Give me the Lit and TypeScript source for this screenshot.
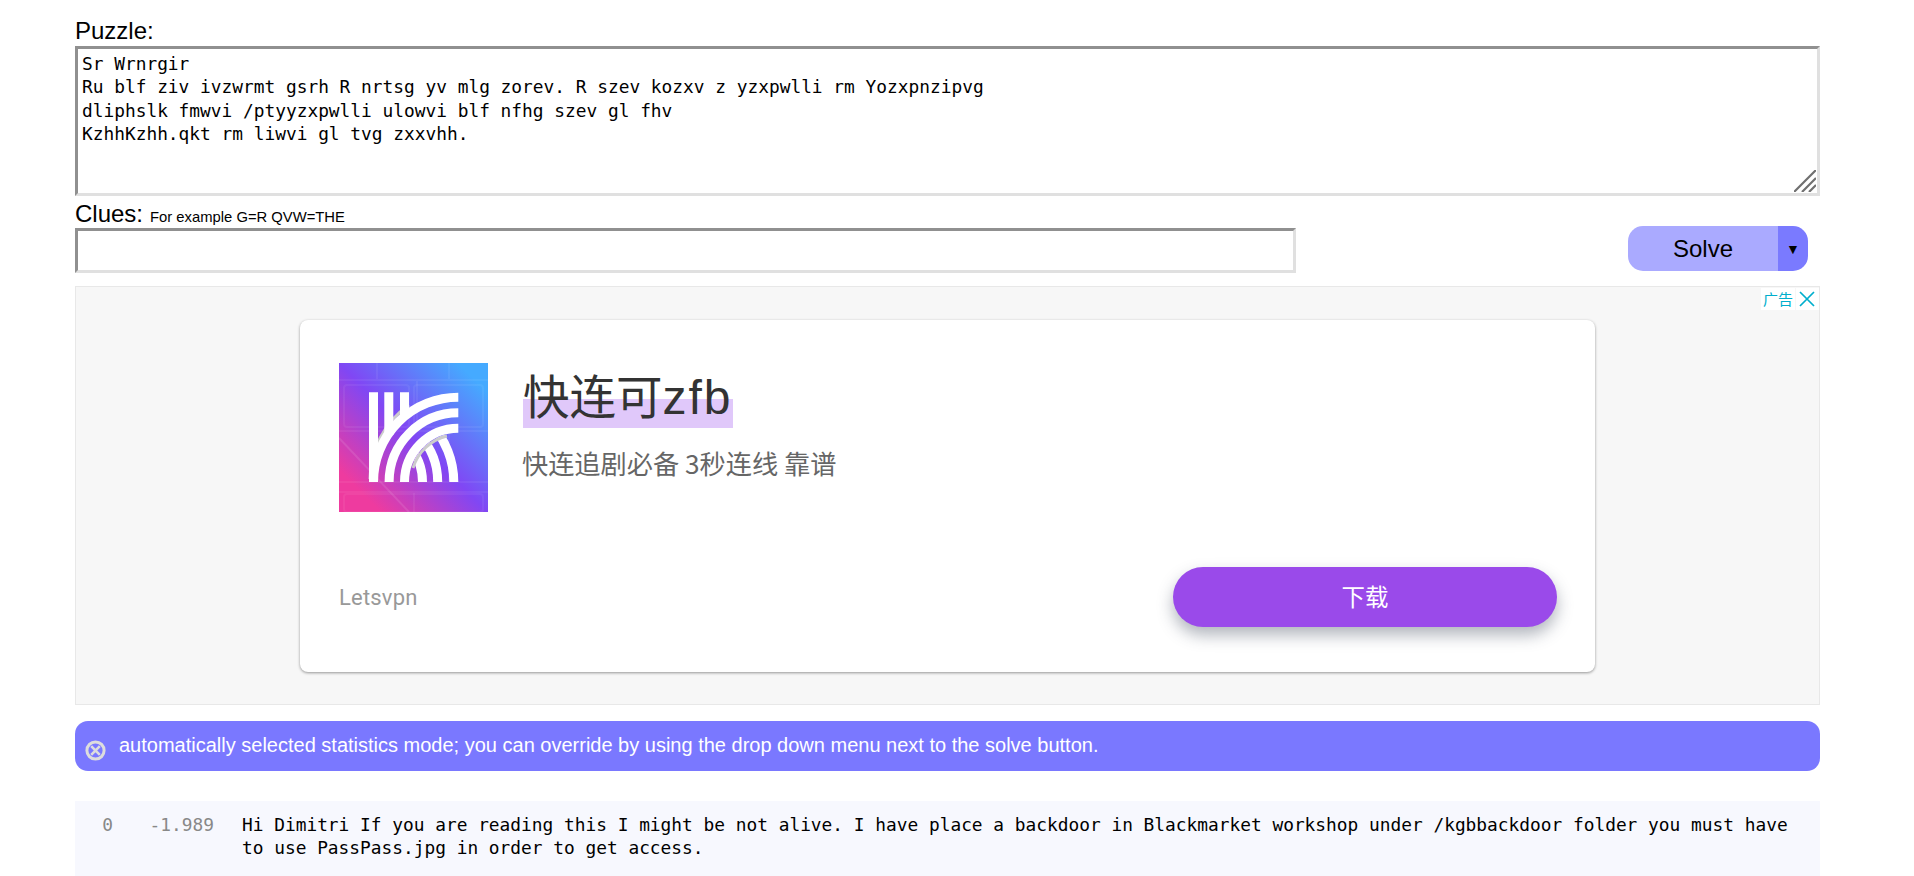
import { LitElement, html, css } from "lit";
import { customElement } from "lit/decorators.js";

@customElement("app-root")
export class AppRoot extends LitElement {
  static styles = css`
    :host { display: block; box-sizing: border-box; padding: 0 94px 0 75px; font-family: "Liberation Sans", Arial, sans-serif; color: #000; background: #fff; }
    * { box-sizing: border-box; }
    .label { font-size: 24px; line-height: 27px; height: 46px; padding-top: 17px; display: block; }
    .area { position: relative; height: 150px; }
    textarea { display: block; width: 100%; height: 150px; resize: none; margin: 0; padding: 3px 4px; outline: none;
      border-style: solid; border-width: 3px; border-color: #909090 #e0e0e0 #e0e0e0 #909090; background: #fff;
      font-family: "DejaVu Sans Mono", monospace; font-size: 17.83px; line-height: 23.4px; color: #000; white-space: pre-wrap; overflow: hidden; }
    .grip { position: absolute; right: 4px; bottom: 4px; width: 22px; height: 22px; pointer-events: none; }
    .clues { height: 32px; display: flex; align-items: flex-end; gap: 7px; font-size: 24px; line-height: 27px; padding-bottom: 1px; }
    .hint { font-size: 14.8px; line-height: 20px; }
    .row { display: flex; align-items: flex-start; height: 58px; }
    input { display: block; width: 1221px; height: 45px; margin: 0; padding: 0 4px; outline: none; border-style: solid; border-width: 3px; border-color: #909090 #e0e0e0 #e0e0e0 #909090; background: #fff; }
    .solve { margin-left: auto; margin-right: 12px; margin-top: -2px; display: flex; width: 180px; height: 45px; border-radius: 15px; overflow: hidden; }
    .solve-main { flex: 1; background: #aaaaff; font-size: 24px; display: flex; align-items: center; justify-content: center; }
    .solve-drop { width: 30px; background: #7a7aff; font-size: 14px; display: flex; align-items: center; justify-content: center; }
    .ad { position: relative; height: 419px; background: #f7f7f7; border: 1px solid #e8e8e8; padding: 33px 224px 32px; }
    .choices { position: absolute; top: 1px; right: 0; display: flex; gap: 1px; height: 22px; }
    .ch-text { background: #fff; color: #00aecd; font-family: "Noto Sans CJK SC", sans-serif; font-size: 15px; line-height: 22px; width: 34px; text-align: center; }
    .ch-x { background: #fff; width: 23px; display: flex; align-items: center; justify-content: center; padding-right: 2px; }
    .card { height: 352px; background: #fff; border-radius: 8px; box-shadow: 0 1px 3px rgba(0,0,0,.4); padding: 43px 38px 45px 39px; display: flex; flex-direction: column; justify-content: space-between; }
    .top { display: flex; gap: 35px; align-items: flex-start; }
    .logo { width: 149px; height: 149px; display: block; flex: none; }
    .title { display: inline-block; font-family: "Liberation Sans", "Noto Sans CJK SC", sans-serif; font-size: 46.5px; line-height: 64px; color: #333; padding-top: 3px; background: linear-gradient(#e0c8fa, #e0c8fa) no-repeat 0 36px / 100% 29px; height: 65px; }
    .latin { font-size: 48px; letter-spacing: 2px; }
    .sub { font-family: "Noto Sans CJK SC", "Liberation Sans", sans-serif; font-size: 26.2px; line-height: 36px; color: #666; margin-top: 17px; margin-left: -1px; }
    .bottom { display: flex; justify-content: space-between; align-items: center; }
    .brand { font-family: Roboto, sans-serif; font-size: 22px; color: #999; letter-spacing: .2px; }
    .dl { width: 384px; height: 60px; padding-bottom: 2px; border-radius: 30px; background: #9a4aea; color: #fff; font-family: "Noto Sans CJK SC", sans-serif; font-size: 23.4px; display: flex; align-items: center; justify-content: center; box-shadow: 0 8px 16px rgba(60,70,90,.4); }
    .msg { margin-top: 16px; height: 50px; background: #7a78ff; border-radius: 13px; color: #fff; font-size: 20px; display: flex; align-items: center; padding-left: 10px; gap: 13px; }
    .msg svg { width: 21px; height: 21px; flex: none; margin-top: 9px; }
    .msg span { margin-top: -1px; }
    .results { margin-top: 30px; height: 75px; background: #f7f8fe; padding: 12px 28px 0 0; display: grid; grid-template-columns: 38px 73px 1fr; column-gap: 28px; font-family: "DejaVu Sans Mono", monospace; font-size: 17.83px; line-height: 23.4px; }
    .num { color: #888; text-align: right; }
  `;

  render() {
    return html`
      <label class="label">Puzzle:</label>
      <div class="area">
        <textarea spellcheck="false">Sr Wrnrgir
Ru blf ziv ivzwrmt gsrh R nrtsg yv mlg zorev. R szev kozxv z yzxpwlli rm Yozxpnzipvg
dliphslk fmwvi /ptyyzxpwlli ulowvi blf nfhg szev gl fhv
KzhhKzhh.qkt rm liwvi gl tvg zxxvhh.</textarea>
        <svg class="grip" viewBox="0 0 22 22" fill="none" stroke="#707070" stroke-width="2.2">
          <path d="M0 22 22 0M8 22 22 8M15 22 22 15" />
        </svg>
      </div>
      <div class="clues"><span>Clues:</span><span class="hint">For example G=R QVW=THE</span></div>
      <div class="row">
        <input type="text" />
        <div class="solve"><div class="solve-main">Solve</div><div class="solve-drop">▼</div></div>
      </div>
      <div class="ad">
        <div class="choices">
          <div class="ch-text">广告</div>
          <div class="ch-x"><svg width="16" height="16" viewBox="0 0 16 16" stroke="#00aecd" stroke-width="1.7" fill="none"><path d="M1 1 15 15M15 1 1 15"/></svg></div>
        </div>
        <div class="card">
          <div class="top">
            <svg class="logo" viewBox="0 0 149 149">
              <defs>
                <linearGradient id="g" x1="0" y1="1" x2="1" y2="0">
                  <stop offset=".14" stop-color="#ee3b9f" />
                  <stop offset=".5" stop-color="#8047f4" />
                  <stop offset=".9" stop-color="#45aaff" />
                </linearGradient>
                <clipPath id="c"><circle cx="119.3" cy="119" r="49" /></clipPath>
              </defs>
              <rect width="149" height="149" fill="url(#g)" />
              <g fill="none" stroke="#fff" stroke-opacity=".06" stroke-width="2">
                <path d="M0 17H149M38 0V17M110 0V17M0 68H149M78 17V68M0 119H149M110 68V119M0 129H149M75 129V149" />
                <rect x="5" y="22" width="65" height="42" rx="3" />
                <rect x="75" y="22" width="69" height="42" rx="3" />
                <rect x="5" y="131" width="139" height="18" rx="3" />
              </g>
              <path d="M0 75 70 149" stroke="#fff" stroke-opacity=".1" stroke-width="2" />
              <path d="M31 116A91 91 0 0 1 70 42" fill="none" stroke="#ccc" stroke-width="3" />
              <path d="M30 29.3h9V119h-9zM45.3 29.3h9V72h-9zM61 29.3h9V55h-9z" fill="#fff" />
              <g clip-path="url(#c)" fill="none" stroke="#fff" stroke-width="9">
                <path d="M114.8 119A84.8 84.8 0 0 0 30 34.2" />
                <path d="M98.7 119A68.7 68.7 0 0 0 30 50.3" />
                <path d="M83.5 119A53.5 53.5 0 0 0 30 65.5" />
              </g>
              <path d="M74 105A47 47 0 0 1 108 73" fill="none" stroke="#ccc" stroke-width="3" />
              <g fill="none" stroke="#fff" stroke-width="9">
                <path d="M34.5 119A84.8 84.8 0 0 1 119.3 34.2" />
                <path d="M50.1 119A69.2 69.2 0 0 1 119.3 49.8" />
                <path d="M65.5 119A53.8 53.8 0 0 1 119.3 65.2" />
              </g>
            </svg>
            <div>
              <div class="title">快连可<span class="latin">zfb</span></div>
              <div class="sub">快连追剧必备 3秒连线 靠谱</div>
            </div>
          </div>
          <div class="bottom">
            <div class="brand">Letsvpn</div>
            <div class="dl">下载</div>
          </div>
        </div>
      </div>
      <div class="msg">
        <svg viewBox="0 0 21 21" fill="none" stroke="#ddd" stroke-width="3"><circle cx="10.5" cy="10.5" r="8.6"/><path d="M6.2 6.2 14.8 14.8M14.8 6.2 6.2 14.8" stroke-width="2.6"/></svg>
        <span>automatically selected statistics mode; you can override by using the drop down menu next to the solve button.</span>
      </div>
      <div class="results">
        <div class="num">0</div>
        <div class="num">-1.989</div>
        <div>Hi Dimitri If you are reading this I might be not alive. I have place a backdoor in Blackmarket workshop under /kgbbackdoor folder you must have to use PassPass.jpg in order to get access.</div>
      </div>
    `;
  }
}
